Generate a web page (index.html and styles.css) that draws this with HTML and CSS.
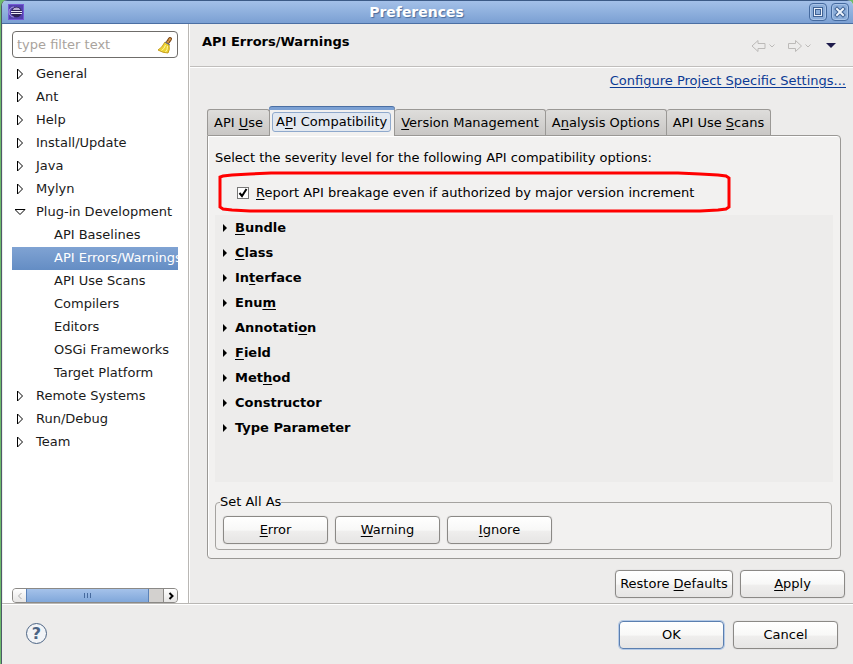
FILE: index.html
```html
<!DOCTYPE html>
<html lang="en">
<head>
    <meta charset="UTF-8">
    <meta name="viewport" content="width=device-width, initial-scale=1.0">
    <title>Preferences</title>
    <link rel="stylesheet" href="styles.css">
</head>
<body>
<div class="window">
    <header class="titlebar">
        <svg class="app-icon" viewBox="0 0 16 16">
            <rect width="16" height="16" fill="#7559d6"/>
            <rect x="1" y="1" width="14" height="14" fill="#5341ae"/>
            <path d="M6 3a5 5 0 0 0 0 10" fill="none" stroke="#a99be0"/>
            <circle cx="8.5" cy="8" r="5.3" fill="#2c2255"/>
            <path d="M4.500 6a4.500 4.500 0 0 1 8 0z" fill="#b9b0d6"/>
            <path d="M3 7.5h11M3 9.5h11" stroke="#ece9f7"/>
        </svg>
        <h1 class="window-title">Preferences</h1>
        <button class="win-button" aria-label="Maximize">
            <svg viewBox="0 0 16 16">
                <path d="M3 3h10v10H3z" fill="#3f6294"/>
                <path d="M4 4h8v8H4z" fill="#e9f0fa"/>
                <path d="M5 5h6v6H5z" fill="#3f6294"/>
                <path d="M6 6h4v4H6z" fill="#8badd9"/>
            </svg>
        </button>
        <button class="win-button" aria-label="Close">
            <svg viewBox="0 0 16 16">
                <path d="M5 5l6 6M11 5l-6 6" stroke="#3f6294" stroke-width="4" stroke-linecap="square"/>
                <path d="M5 5l6 6M11 5l-6 6" stroke="#eef4fc" stroke-width="2" stroke-linecap="square"/>
            </svg>
        </button>
    </header>

    <div class="content">
        <nav class="sidebar">
            <div class="filter">
                <input class="filter-input" type="text" placeholder="type filter text" aria-label="type filter text">
                <svg class="broom" viewBox="0 0 16 18">
                    <path d="M13 3l-2 3" stroke="#7a4412" stroke-width="4" stroke-linecap="round"/>
                    <path d="M13 3l-2 3" stroke="#d99a45" stroke-width="2" stroke-linecap="round" stroke-dasharray="1 2"/>
                    <path d="M8 6l4 3q1 5-1 8-5 0-10-3 4-2 7-8z" fill="#ecd233" stroke="#c79f1c"/>
                    <path d="M8.5 9q-1 4-4 5.5M10.5 10q0 4-2 6" fill="none" stroke="#fff7a0"/>
                    <path d="M8 6l5 3" stroke="#5a6a94"/>
                </svg>
            </div>
            <ul class="tree">
                <li><a class="node closed" href="#">General</a></li>
                <li><a class="node closed" href="#">Ant</a></li>
                <li><a class="node closed" href="#">Help</a></li>
                <li><a class="node closed" href="#">Install/Update</a></li>
                <li><a class="node closed" href="#">Java</a></li>
                <li><a class="node closed" href="#">Mylyn</a></li>
                <li>
                    <a class="node open" href="#">Plug-in Development</a>
                    <ul class="subtree">
                        <li><a class="node" href="#">API Baselines</a></li>
                        <li><a class="node current" href="#">API Errors/Warnings</a></li>
                        <li><a class="node" href="#">API Use Scans</a></li>
                        <li><a class="node" href="#">Compilers</a></li>
                        <li><a class="node" href="#">Editors</a></li>
                        <li><a class="node" href="#">OSGi Frameworks</a></li>
                        <li><a class="node" href="#">Target Platform</a></li>
                    </ul>
                </li>
                <li><a class="node closed" href="#">Remote Systems</a></li>
                <li><a class="node closed" href="#">Run/Debug</a></li>
                <li><a class="node closed" href="#">Team</a></li>
            </ul>
            <div class="scrollbar">
                <button class="scroll-button left" aria-label="Scroll left"><svg viewBox="0 0 8 8"><path d="M5.5 1l-3 3 3 3"/></svg></button>
                <div class="scroll-track"><div class="scroll-thumb"><i></i><i></i><i></i></div></div>
                <button class="scroll-button right" aria-label="Scroll right"><svg viewBox="0 0 8 8"><path d="M2.5 1l3 3-3 3"/></svg></button>
            </div>
        </nav>

        <main class="page">
            <div class="page-head">
                <h2>API Errors/Warnings</h2>
                <div class="history">
                    <button class="tool" aria-label="Back"><svg width="26" height="14" viewBox="0 0 26 14"><path d="M1 7l6-5.5v3h7v5H7v3zM18.5 5.5L21 8l2.500-2.500"/></svg></button>
                    <button class="tool" aria-label="Forward"><svg width="26" height="14" viewBox="0 0 26 14"><path d="M14.5 7l-6-5.5v3h-7v5h7v3zM18.5 5.5L21 8l2.500-2.500"/></svg></button>
                    <button class="tool menu" aria-label="Menu"><svg width="10" height="6" viewBox="0 0 10 6"><path d="M0 0h10L5 5z"/></svg></button>
                </div>
            </div>

            <div class="page-body">
                <a class="project-link" href="#">Configure Project Specific Settings...</a>

                <div class="tabs" role="tablist">
                    <button class="tab" role="tab">API <u>U</u>se</button>
                    <button class="tab active" role="tab" aria-selected="true"><span>A<u>P</u>I Compatibility</span></button>
                    <button class="tab" role="tab"><u>V</u>ersion Management</button>
                    <button class="tab" role="tab">A<u>n</u>alysis Options</button>
                    <button class="tab" role="tab">API Use <u>S</u>cans</button>
                </div>

                <section class="panel">
                    <p class="intro">Select the severity level for the following API compatibility options:</p>
                    <div class="report">
                        <input type="checkbox" id="report" checked>
                        <label for="report"><u>R</u>eport API breakage even if authorized by major version increment</label>
                        <svg class="marker" viewBox="0 0 514 42">
                            <path d="M2 36V6L5 5 14 4 32 3 53 2H460L482 3 500 4 508 5 511 7V36L508 38 500 39 482 40H32L14 39 5 38z"/>
                        </svg>
                    </div>
                    <div class="options">
                        <button class="option"><span><u>B</u>undle</span></button>
                        <button class="option"><span><u>C</u>lass</span></button>
                        <button class="option"><span>In<u>t</u>erface</span></button>
                        <button class="option"><span>Enu<u>m</u></span></button>
                        <button class="option"><span>Annotati<u>o</u>n</span></button>
                        <button class="option"><span><u>F</u>ield</span></button>
                        <button class="option"><span>Met<u>h</u>od</span></button>
                        <button class="option"><span>Constructor</span></button>
                        <button class="option"><span>Type Parameter</span></button>
                    </div>
                    <fieldset class="set-all">
                        <legend>Set All As</legend>
                        <button class="button"><u>E</u>rror</button>
                        <button class="button"><u>W</u>arning</button>
                        <button class="button"><u>I</u>gnore</button>
                    </fieldset>
                </section>

                <div class="page-actions">
                    <button class="button wide">Restore <u>D</u>efaults</button>
                    <button class="button"><u>A</u>pply</button>
                </div>
            </div>
        </main>
    </div>

    <footer class="footer">
        <button class="help" aria-label="Help">?</button>
        <div class="footer-actions">
            <button class="button default">OK</button>
            <button class="button">Cancel</button>
        </div>
    </footer>
</div>
</body>
</html>
```

FILE: styles.css
```css
* {
    box-sizing: border-box;
}
body {
    margin: 0;
    background: #6cbb6a;
    font-family: "DejaVu Sans", sans-serif;
    font-size: 13px;
    line-height: 16px;
    color: #000;
}
button {
    font: inherit;
    color: inherit;
    padding: 0;
    border: none;
    background: none;
    white-space: nowrap;
}
u {
    text-underline-offset: 2px;
}
ul {
    list-style: none;
    margin: 0;
    padding: 0;
}
.window {
    display: flex;
    flex-direction: column;
    min-height: 100vh;
    margin-left: 1px;
    border-left: 1px solid #4d5a68;
    border-radius: 6px 6px 0 0;
    background: #edeceb;
    overflow: hidden;
}

/* title bar */
.titlebar {
    display: flex;
    align-items: center;
    gap: 4px;
    height: 24px;
    padding: 0 4px 0 6px;
    border-top: 1px solid #3c5a86;
    border-bottom: 1px solid #4b6fa3;
    background: linear-gradient(#a3c0e8, #7ba0d3);
}
.app-icon {
    width: 16px;
    height: 16px;
}
.window-title {
    flex: 1;
    margin: 0;
    text-align: center;
    font-size: 14px;
    color: #fff;
    text-shadow: 1px 1px 1px #4a6c9c;
}
.win-button {
    width: 18px;
    height: 18px;
    border: 1px solid #456a9f;
    border-radius: 4px;
    background: #8badd9;
    box-shadow: inset 0 0 0 1px #a9c4e8;
}
.win-button svg {
    display: block;
}

/* left side */
.content {
    display: flex;
    flex: 1;
    border-bottom: 1px solid #b9b7b4;
}
.sidebar {
    display: flex;
    flex-direction: column;
    width: 187px;
    padding: 7px 10px 0 9px;
    border-left: 1px solid #edeceb;
    border-right: 1px solid #b9b7b4;
    background: #fff;
}
.filter {
    display: flex;
    align-items: center;
    height: 27px;
    padding: 0 4px;
    border: 1px solid #6f6d6a;
    border-radius: 4px;
}
.filter-input {
    flex: 1;
    min-width: 0;
    padding: 0;
    border: none;
    outline: none;
    font: inherit;
}
.filter-input::placeholder {
    color: #a9a39d;
}
.broom {
    width: 16px;
    height: 18px;
}
.tree {
    flex: 1;
    margin-top: 5px;
}
.node {
    display: flex;
    align-items: center;
    height: 23px;
    padding: 0 0 1px 24px;
    color: #1a1a1a;
    text-decoration: none;
    white-space: nowrap;
    overflow: hidden;
}
.subtree .node {
    padding-left: 42px;
}
.closed,
.open {
    padding-left: 3px;
}
.closed::before,
.open::before {
    content: "";
    width: 21px;
    height: 12px;
    background: no-repeat url("data:image/svg+xml,%3Csvg xmlns='http://www.w3.org/2000/svg' width='12' height='12'%3E%3Cpath d='M2.5 1v10l5-5z' fill='none' stroke='%23000'/%3E%3C/svg%3E");
}
.open::before {
    background-image: url("data:image/svg+xml,%3Csvg xmlns='http://www.w3.org/2000/svg' width='12' height='12'%3E%3Cpath d='M0 3.5h10l-5 5z' fill='none' stroke='%23000'/%3E%3C/svg%3E");
}
.subtree .current {
    color: #fff;
    background: linear-gradient(#80a3d3, #648dc4);
}
.scrollbar {
    display: flex;
    height: 15px;
    border: 1px solid #8b8986;
    border-radius: 4px;
    background: #d3d1cf;
    overflow: hidden;
}
.scroll-button {
    width: 13px;
    background: linear-gradient(#fff, #e6e5e4);
}
.scroll-button.right {
    width: 14px;
    border-left: 1px solid #8b8986;
}
.scroll-button svg {
    display: block;
    width: 8px;
    height: 8px;
    margin: 0 auto;
    fill: none;
    stroke: #000;
    stroke-width: 2;
}
.scroll-button.left svg {
    stroke: #aaa;
    stroke-width: 1;
}
.scroll-track {
    flex: 1;
}
.scroll-thumb {
    display: flex;
    align-items: center;
    justify-content: center;
    gap: 2px;
    width: 90%;
    height: 100%;
    border: 1px solid #5b82b8;
    border-width: 0 1px;
    background: linear-gradient(#a5c2ea, #80a7da);
}
.scroll-thumb i {
    width: 1px;
    height: 5px;
    background: #466a9e;
}

/* preference page */
.page {
    flex: 1;
    min-width: 0;
    border-left: 1px solid #fff;
}
.page-head {
    display: flex;
    justify-content: space-between;
    height: 43px;
    padding: 10px 17px 0 12px;
    border-bottom: 1px solid #c0bebc;
    box-shadow: 0 1px #fff;
}
.page-head h2 {
    margin: 0;
    font-size: 13px;
    line-height: 16px;
}
.history {
    display: flex;
    align-items: center;
    gap: 10px;
    height: 24px;
}
.tool svg {
    display: block;
    fill: none;
    stroke: #bcbab8;
}
.tool.menu svg {
    margin-left: 3px;
    fill: #1e1b4b;
    stroke: none;
}
.page-body {
    display: flex;
    flex-direction: column;
    padding: 6px 7px 5px 17px;
}
.project-link {
    align-self: flex-end;
    color: #0b3a94;
    text-underline-offset: 2px;
    white-space: nowrap;
}
.tabs {
    display: flex;
    align-items: flex-end;
    height: 30px;
    margin-top: 17px;
    position: relative;
    z-index: 1;
}
.tab {
    height: 26px;
    margin-bottom: 1px;
    padding: 1px 6px 0;
    border: 1px solid #9a9895;
    border-width: 1px 1px 0 0;
    border-radius: 3px 3px 0 0;
    background: linear-gradient(#dedddb, #c9c7c5);
}
.tab:first-child {
    border-left-width: 1px;
}
.tab.active {
    height: 29px;
    margin: 0 0 0 -1px;
    padding: 0 3px;
    border-top: 3px solid #7ba0d3;
    background: #f2f1f0;
    box-shadow: inset 1px 0 #9a9895, 0 -1px #4b6fa3;
}
.tab.active span {
    display: block;
    margin-bottom: 2px;
    padding: 1px 3px;
    border: 1px solid #8fa9cc;
    border-radius: 3px;
    background: #e2e8f0;
}
.panel {
    margin: -1px 5px 0 0;
    padding: 14px 7px 8px;
    border: 1px solid #9a9895;
    border-radius: 0 4px 4px 4px;
    background: #f2f1f0;
    box-shadow: inset 1px 1px #fff;
}
.intro {
    margin: 0;
}
.report {
    display: flex;
    align-items: center;
    gap: 7px;
    height: 49px;
    padding: 4px 0 0 22px;
    position: relative;
    white-space: nowrap;
}
.report input {
    appearance: none;
    width: 12px;
    height: 12px;
    margin: 0;
    border: 1px solid #777;
    background: #fff url("data:image/svg+xml,%3Csvg xmlns='http://www.w3.org/2000/svg' width='10' height='10'%3E%3Cpath d='M1.5 5l2.5 3 4.5-7' fill='none' stroke='%23000' stroke-width='2'/%3E%3C/svg%3E");
}
/* hand-drawn ring round the new option */
.marker {
    position: absolute;
    left: 3px;
    top: 5px;
    width: 514px;
    height: 42px;
    fill: none;
    stroke: #f00;
    stroke-width: 3;
    pointer-events: none;
}
.options {
    display: flex;
    flex-direction: column;
    min-height: 267px;
    background: #edeceb;
}
.option {
    display: flex;
    align-items: center;
    gap: 8px;
    height: 25px;
    padding-left: 8px;
    font-weight: bold;
}
.option::before {
    content: "";
    border: 4px solid transparent;
    border-left-color: #000;
    border-right-width: 0;
}
.set-all {
    display: flex;
    gap: 7px;
    margin: 12px 1px 0 0;
    padding: 6px 7px 5px;
    border: 1px solid #a5a3a0;
    border-radius: 4px;
}
.set-all legend {
    padding: 0;
    margin-left: -3px;
}
.button {
    width: 105px;
    height: 28px;
    border: 1px solid #8b8986;
    border-radius: 4px;
    background: linear-gradient(#fff, #f8f8f7 50%, #efeeed 55%, #e6e5e4);
    box-shadow: 0 0 1px #aaa;
}
.button.wide {
    width: 118px;
}
.button.default {
    border-color: #5b7fb0;
    box-shadow: 0 0 0 1px #b5cae6;
}
.page-actions {
    display: flex;
    justify-content: flex-end;
    gap: 7px;
    margin: 11px 1px 0 0;
}

/* bottom bar */
.footer {
    display: flex;
    justify-content: space-between;
    padding: 16px 15px 16px 24px;
    border-top: 1px solid #fff;
}
.footer-actions {
    display: flex;
    gap: 9px;
}
.help {
    width: 21px;
    height: 21px;
    margin-top: 2px;
    border: 1px solid #4c6484;
    border-radius: 50%;
    font-size: 16px;
    font-weight: bold;
    line-height: 18px;
    color: #4c6484;
    background: #f2f4f7;
}
```
